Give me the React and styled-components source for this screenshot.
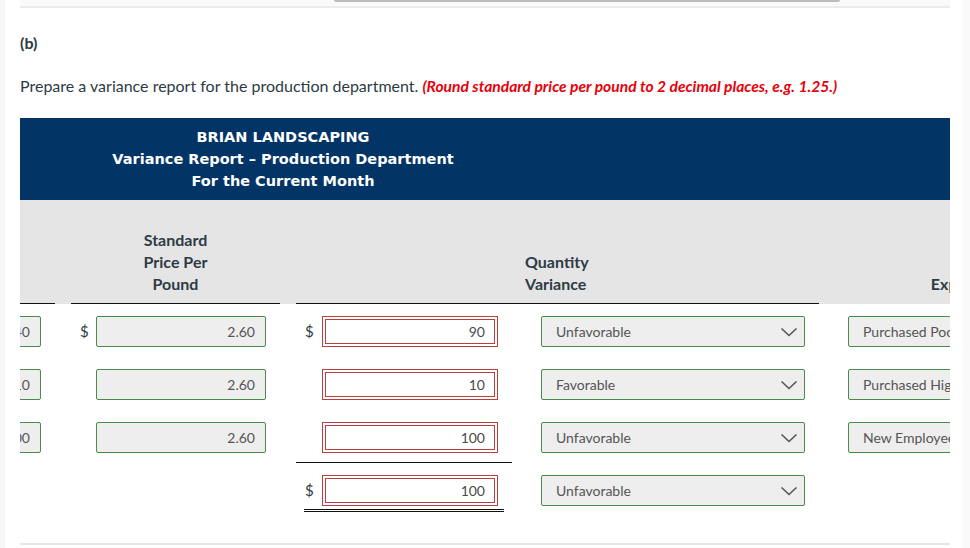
import React from 'react';
import styled, { createGlobalStyle } from 'styled-components';

const GlobalStyle = createGlobalStyle`
  body {
    margin: 0;
    background: #fff;
    font-family: 'Lato', 'Liberation Sans', sans-serif;
    color: #2d3b45;
  }
`;

const COLS = '95px 16px 209px 16px 216px 13px 294px 16px 276px';

const Page = styled.div`
  display: flex;
  min-height: 548px;
`;

const LeftRail = styled.div`
  width: 5px;
  background: #f7f7f7;
`;

const RightRail = styled.div`
  width: 7px;
  background: #f9f9f9;
`;

const Main = styled.div`
  flex: 1;
  min-width: 0;
  padding: 0 13px 0 15px;
`;

const TopBar = styled.div`
  height: 6px;
  background: #fafafa;
  border-bottom: 2px solid #ececec;
  padding-left: 314px;
`;

const Thumb = styled.div`
  width: 506px;
  height: 2px;
  background: #bcbcbc;
  border-radius: 0 0 3px 3px;
`;

const PartLabel = styled.div`
  margin-top: 24px;
  font-size: 16px;
  font-weight: 700;
  line-height: 22px;
`;

const Instructions = styled.p`
  margin: 21px 0 0;
  font-size: 16px;
  line-height: 22px;
`;

const Hint = styled.span`
  color: #e8000b;
  font-weight: 700;
  font-style: italic;
  font-size: 15.6px;
`;

const Report = styled.div`
  margin-top: 21px;
  overflow: hidden;
`;

const Sheet = styled.div`
  margin-left: -60px;
  width: 1200px;
`;

const TitleBar = styled.div`
  background: #023466;
  padding: 8px 0;
`;

const Title = styled.div`
  width: 646px;
  text-align: center;
  color: #fff;
  font-family: 'DejaVu Sans', Verdana, sans-serif;
  font-size: 14.5px;
  font-weight: 700;
  line-height: 22px;
`;

const HeadRow = styled.div`
  display: grid;
  grid-template-columns: ${COLS};
  height: 104px;
  background: #e5e5e5;
`;

const HeadCell = styled.div`
  display: flex;
  align-items: flex-end;
  justify-content: ${(p) => (p.$align === 'left' ? 'flex-start' : 'center')};
  text-align: ${(p) => (p.$align === 'left' ? 'left' : 'center')};
  padding-bottom: 8px;
  border-bottom: ${(p) => (p.$rule ? '1px solid #111' : '1px solid transparent')};
  font-size: 16px;
  font-weight: 700;
  line-height: 22px;
  color: #2d3b45;
  white-space: nowrap;
`;

const Row = styled.div`
  display: grid;
  grid-template-columns: ${COLS};
  height: 53px;
`;

const Cell = styled.div`
  box-sizing: border-box;
  padding: 12px 14px 0 ${(p) => p.$padLeft || 8}px;
  border-bottom: ${(p) => (p.$rule ? '1px solid #111' : 'none')};
`;

const Amount = styled.div`
  display: grid;
  grid-template-columns: ${(p) => p.$dollar}px 1fr;
  align-items: center;
`;

const Dollar = styled.span`
  font-size: 15px;
  color: #2d3b45;
  line-height: 31px;
`;

const Field = styled.div`
  box-sizing: border-box;
  height: 31px;
  display: flex;
  align-items: center;
  justify-content: ${(p) => (p.$left ? 'flex-start' : 'flex-end')};
  padding: 0 ${(p) => (p.$left ? '0' : p.$padRight || 10)}px 0 ${(p) => (p.$left ? 14 : 0)}px;
  background: #eeeeee;
  border: 1px solid #4a8a4a;
  border-radius: 2px;
  font-size: 14px;
  color: #555;
  white-space: nowrap;
  overflow: hidden;
`;

const Answer = styled.div`
  box-sizing: border-box;
  height: 31px;
  display: flex;
  align-items: center;
  justify-content: flex-end;
  padding-right: 12px;
  background: #fff;
  border: 1px solid #bc3f3f;
  box-shadow: inset 0 0 0 2px #fff, inset 0 0 0 3px #bc3f3f;
  font-size: 14px;
  color: #4a4a4a;
`;

const Select = styled.div`
  box-sizing: border-box;
  height: 31px;
  display: flex;
  align-items: center;
  justify-content: space-between;
  padding: 0 6px 0 14px;
  background: #eeeeee;
  border: 1px solid #4a8a4a;
  border-radius: 2px;
  font-size: 14px;
  color: #555;
`;

const DoubleRule = styled.div`
  margin: 3px -6px 0 -1px;
  border-top: 3px double #111;
`;

const BottomRule = styled.div`
  margin-top: 27px;
  height: 2px;
  background: #e6e6e6;
`;

const Chevron = () => (
  <svg width="18" height="10" viewBox="0 0 18 10">
    <path d="M1.5 1.5 L9 8.5 L16.5 1.5" fill="none" stroke="#555" strokeWidth="1.6" />
  </svg>
);

const rows = [
  { qty: '1,240', price: '2.60', variance: '90', kind: 'Unfavorable', why: 'Purchased Poor Quality Materials', dollar: true },
  { qty: '1,210', price: '2.60', variance: '10', kind: 'Favorable', why: 'Purchased Higher Quality Materials', dollar: false },
  { qty: '1,300', price: '2.60', variance: '100', kind: 'Unfavorable', why: 'New Employees', dollar: false },
];

const Spacer = () => <div />;

const App = () => (
  <>
    <GlobalStyle />
    <Page>
      <LeftRail />
      <Main>
        <TopBar>
          <Thumb />
        </TopBar>
        <PartLabel>(b)</PartLabel>
        <Instructions>
          Prepare a variance report for the production department.{' '}
          <Hint>(Round standard price per pound to 2 decimal places, e.g. 1.25.)</Hint>
        </Instructions>

        <Report>
          <Sheet>
            <TitleBar>
              <Title>
                BRIAN LANDSCAPING
                <br />
                Variance Report – Production Department
                <br />
                For the Current Month
              </Title>
            </TitleBar>

            <HeadRow>
              <HeadCell $rule />
              <Spacer />
              <HeadCell $rule>
                Standard
                <br />
                Price Per
                <br />
                Pound
              </HeadCell>
              <Spacer />
              <HeadCell $rule />
              <HeadCell $rule />
              <HeadCell $rule $align="left">
                Quantity
                <br />
                Variance
              </HeadCell>
              <Spacer />
              <HeadCell>Explanation</HeadCell>
            </HeadRow>

            {rows.map((r, i) => (
              <Row key={i}>
                <Cell>
                  <Field>{r.qty}</Field>
                </Cell>
                <Spacer />
                <Cell $padLeft={9}>
                  <Amount $dollar={16}>
                    <Dollar>{r.dollar ? '$' : ''}</Dollar>
                    <Field>{r.price}</Field>
                  </Amount>
                </Cell>
                <Spacer />
                <Cell $padLeft={9} $rule={i === rows.length - 1}>
                  <Amount $dollar={17}>
                    <Dollar>{r.dollar ? '$' : ''}</Dollar>
                    <Answer>{r.variance}</Answer>
                  </Amount>
                </Cell>
                <Spacer />
                <Cell $padLeft={16}>
                  <Select>
                    {r.kind}
                    <Chevron />
                  </Select>
                </Cell>
                <Spacer />
                <Cell $padLeft={13}>
                  <Field $left>{r.why}</Field>
                </Cell>
              </Row>
            ))}

            <Row>
              <Spacer />
              <Spacer />
              <Spacer />
              <Spacer />
              <Cell $padLeft={9}>
                <Amount $dollar={17}>
                  <Dollar>$</Dollar>
                  <Answer>100</Answer>
                </Amount>
                <DoubleRule />
              </Cell>
              <Spacer />
              <Cell $padLeft={16}>
                <Select>
                  Unfavorable
                  <Chevron />
                </Select>
              </Cell>
            </Row>
          </Sheet>
        </Report>
        <BottomRule />
      </Main>
      <RightRail />
    </Page>
  </>
);

export default App;
